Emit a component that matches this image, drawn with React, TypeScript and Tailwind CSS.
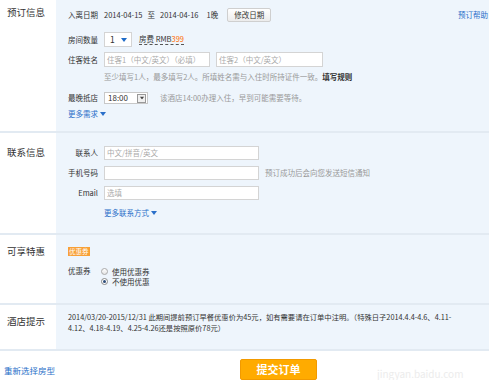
import React from "react";

const font = { fontFamily: '"Noto Sans CJK SC", "Liberation Sans", sans-serif' };

const Caret = ({ className = "" }: { className?: string }) => (
  <svg width="6" height="4" viewBox="0 0 6 4" className={className}>
    <path d="M0 0 L6 0 L3 4 Z" fill="currentColor" />
  </svg>
);

const Section = ({
  title,
  titleTop,
  height,
  children,
}: {
  title: string;
  titleTop: string;
  height: string;
  children: React.ReactNode;
}) => (
  <div className={`flex border-b-2 border-[#e2eaf2] ${height}`}>
    <div className={`w-[56px] shrink-0 bg-white pl-[7px] text-[9.5px] leading-[14px] text-[#333] ${titleTop}`}>
      {title}
    </div>
    <div className="flex-1 bg-[#eef5fc] pl-[12px]">{children}</div>
  </div>
);

const App = () => {
  return (
    <div className="relative h-[380px] w-[489px] overflow-hidden bg-white text-[7.5px] text-[#333]" style={font}>
      {/* 预订信息 */}
      <Section title="预订信息" titleTop="pt-[5px]" height="h-[133px]">
        <div className="mt-[8px] flex h-[14px] items-center whitespace-nowrap">
          <span className="w-[36px]">入离日期</span>
          <span>2014-04-15</span>
          <span className="ml-[5px]">至</span>
          <span className="ml-[5px]">2014-04-16</span>
          <span className="ml-[8px]">1晚</span>
          <button className="ml-[9px] h-[14px] rounded-[2px] border border-[#cfcfcf] bg-gradient-to-b from-white to-[#ececec] px-[6px] text-[7.5px] leading-[12px] text-[#333]">
            修改日期
          </button>
          <a className="ml-auto mr-[1px] text-[#2a6fc9]">预订帮助</a>
        </div>

        <div className="mt-[10px] flex h-[15px] items-center whitespace-nowrap">
          <span className="w-[36px]">房间数量</span>
          <div className="flex h-[15px] w-[28px] items-center border border-[#d4d4d4] bg-white pl-[5px]">
            <span className="text-[8.5px]">1</span>
            <Caret className="ml-[6px] text-[#1e6bc8]" />
          </div>
          <span className="ml-[7px] border-b border-dashed border-[#555] leading-[10px]">
            房费 RMB<span className="text-[#ff6a00]">399</span>
          </span>
        </div>

        <div className="mt-[5px] flex h-[15px] items-center whitespace-nowrap">
          <span className="w-[36px]">住客姓名</span>
          <div className="flex h-[15px] w-[106px] items-center border border-[#d4d4d4] bg-white pl-[2px] text-[#aaa]">
            住客1（中文/英文）（必填）
          </div>
          <div className="ml-[6px] flex h-[15px] w-[107px] items-center border border-[#d4d4d4] bg-white pl-[2px] text-[#aaa]">
            住客2（中文/英文）
          </div>
        </div>

        <div className="mt-[5px] pl-[36px] leading-[9px] whitespace-nowrap text-[#999]">
          至少填写1人，最多填写2人。所填姓名需与入住时所持证件一致。
          <span className="font-bold text-[#333]">填写规则</span>
        </div>

        <div className="mt-[11px] flex h-[12px] items-center whitespace-nowrap">
          <span className="w-[36px]">最晚抵店</span>
          <div className="flex h-[12px] w-[44px] items-center justify-between border border-[#c8c8c8] bg-white pl-[3px] pr-[1px]">
            <span className="text-[8px]">18:00</span>
            <span className="flex h-[9px] w-[9px] items-center justify-center border border-[#999] bg-[#f0f0f0]">
              <Caret className="scale-75 text-[#444]" />
            </span>
          </div>
          <span className="ml-[12px] text-[#999]">该酒店14:00办理入住，早到可能需要等待。</span>
        </div>

        <div className="mt-[5px] flex items-center leading-[10px] text-[#2a6fc9]">
          更多需求
          <Caret className="ml-[2px]" />
        </div>
      </Section>

      {/* 联系信息 */}
      <Section title="联系信息" titleTop="pt-[12px]" height="h-[102px]">
        <div className="flex flex-col gap-[6px] pt-[13px]">
          <div className="flex h-[14px] items-center whitespace-nowrap">
            <span className="w-[30px] text-right">联系人</span>
            <div className="ml-[6px] flex h-[14px] w-[155px] items-center border border-[#d4d4d4] bg-white pl-[2px] text-[#aaa]">
              中文/拼音/英文
            </div>
          </div>
          <div className="flex h-[14px] items-center whitespace-nowrap">
            <span className="w-[30px] text-right">手机号码</span>
            <div className="ml-[6px] h-[14px] w-[155px] border border-[#d4d4d4] bg-white" />
            <span className="ml-[6px] text-[#999]">预订成功后会向您发送短信通知</span>
          </div>
          <div className="flex h-[14px] items-center whitespace-nowrap">
            <span className="w-[30px] text-right">Email</span>
            <div className="ml-[6px] flex h-[14px] w-[155px] items-center border border-[#d4d4d4] bg-white pl-[2px] text-[#aaa]">
              选填
            </div>
          </div>
        </div>
        <div className="mt-[8px] flex items-center pl-[36px] leading-[10px] text-[#2a6fc9]">
          更多联系方式
          <Caret className="ml-[2px]" />
        </div>
      </Section>

      {/* 可享特惠 */}
      <Section title="可享特惠" titleTop="pt-[9px]" height="h-[70px]">
        <div className="pt-[10px]">
          <span className="inline-block h-[9px] bg-[#f8a036] px-[1px] text-[6.5px] leading-[9px] text-white">优惠券</span>
        </div>
        <div className="mt-[10px] flex">
          <span className="w-[33px] leading-[10px]">优惠券</span>
          <div className="flex flex-col">
            <label className="flex h-[10px] items-center">
              <span className="h-[7px] w-[7px] rounded-full border border-[#aaa] bg-gradient-to-b from-white to-[#e4e4e4]" />
              <span className="ml-[4px]">使用优惠券</span>
            </label>
            <label className="flex h-[10px] items-center">
              <span className="flex h-[7px] w-[7px] items-center justify-center rounded-full border border-[#888] bg-white">
                <span className="h-[3px] w-[3px] rounded-full bg-[#2d4d7a]" />
              </span>
              <span className="ml-[4px]">不使用优惠</span>
            </label>
          </div>
        </div>
      </Section>

      {/* 酒店提示 */}
      <Section title="酒店提示" titleTop="pt-[9px]" height="h-[46px]">
        <div className="pt-[7px] text-[7.3px] leading-[11px] whitespace-nowrap">
          2014/03/20-2015/12/31 此期间提前预订早餐优惠价为45元，如有需要请在订单中注明。（特殊日子2014.4.4-4.6、4.11-
          <br />
          4.12、4.18-4.19、4.25-4.26还是按照原价78元）
        </div>
      </Section>

      {/* 底部 */}
      <div className="flex items-start pt-[8px]">
        <a className="ml-[4px] mt-[6px] text-[8.5px] leading-[10px] text-[#2a6fc9]">重新选择房型</a>
        <button className="ml-[185px] h-[21px] w-[77px] rounded-[2px] border border-[#f29a00] bg-[#ffab00] text-[11px] font-bold leading-[19px] text-white">
          提交订单
        </button>
        <span className="ml-[60px] mt-[9px] text-[10px] leading-[12px] text-[#ececec]">jingyan.baidu.com</span>
      </div>
    </div>
  );
};

export default App;
